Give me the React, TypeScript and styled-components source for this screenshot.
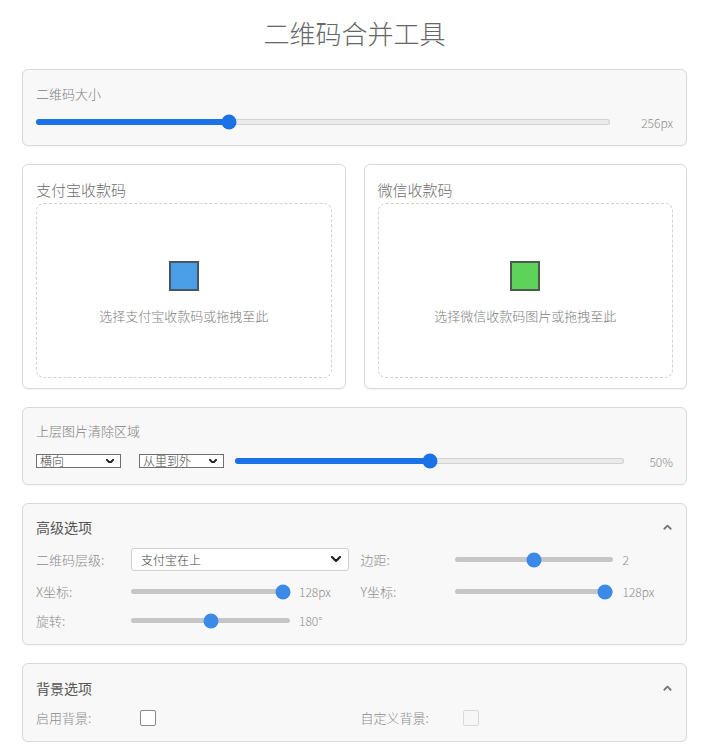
import React from 'react';
import styled, { createGlobalStyle } from 'styled-components';

const Global = createGlobalStyle`
  html, body { margin: 0; padding: 0; background: #fff; }
  body {
    font-family: "Noto Sans CJK SC", "Noto Sans", sans-serif;
    color: #666;
  }
`;

const Page = styled.div`
  width: 665px;
  margin-left: 22px;
  padding-top: 15px;
  display: flex;
  flex-direction: column;
  gap: 18px;
`;

const Title = styled.h1`
  margin: 0;
  font-size: 26px;
  line-height: 36px;
  font-weight: 300;
  color: #666;
  text-align: center;
`;

const Card = styled.section<{ $white?: boolean; $pad: string }>`
  box-sizing: border-box;
  background: ${p => (p.$white ? '#fff' : '#f8f8f8')};
  border: 1px solid #d9d9d9;
  border-radius: 6px;
  box-shadow: 0 1px 2px rgba(0, 0, 0, 0.04);
  padding: ${p => p.$pad};
  display: flex;
  flex-direction: column;
`;

const Label = styled.div<{ $mb: number }>`
  font-size: 13px;
  line-height: 18px;
  font-weight: 300;
  color: #808080;
  margin-bottom: ${p => p.$mb}px;
`;

const SliderRow = styled.div`
  display: flex;
  align-items: center;
  height: 18px;
`;

const Value = styled.span<{ $w?: number; $ml?: number }>`
  font-size: 12px;
  font-weight: 300;
  color: #8c8c8c;
  white-space: nowrap;
  ${p => (p.$w ? `width: ${p.$w}px; text-align: right;` : '')}
  margin-left: ${p => p.$ml ?? 13}px;
`;

const Track = styled.div<{ $tone: 'blue' | 'gray'; $w?: number }>`
  position: relative;
  ${p => (p.$w ? `width: ${p.$w}px; flex: none;` : 'flex: 1;')}
  height: ${p => (p.$tone === 'blue' ? 6 : 5)}px;
  border-radius: 4px;
  background: ${p => (p.$tone === 'blue' ? '#ebebeb' : '#c6c6c6')};
  box-shadow: ${p => (p.$tone === 'blue' ? 'inset 0 0 0 1px #d2d2d2' : 'none')};
`;

const Fill = styled.div`
  position: absolute;
  left: 0;
  top: 0;
  bottom: 0;
  border-radius: 4px;
  background: #1b72e6;
`;

const Thumb = styled.div<{ $tone: 'blue' | 'gray' }>`
  position: absolute;
  top: 50%;
  width: 15px;
  height: 15px;
  border-radius: 50%;
  background: ${p => (p.$tone === 'blue' ? '#1b72e6' : '#3b8ae8')};
  transform: translate(-50%, -50%);
`;

function Slider({ pct, tone, w }: { pct: number; tone: 'blue' | 'gray'; w?: number }) {
  const pos = `calc(7.5px + ${pct} * (100% - 15px))`;
  return (
    <Track $tone={tone} $w={w}>
      {tone === 'blue' && <Fill style={{ width: pos }} />}
      <Thumb $tone={tone} style={{ left: pos }} />
    </Track>
  );
}

const Pair = styled.div`
  display: grid;
  grid-template-columns: 1fr 1fr;
  gap: 18px;
`;

const UploadTitle = styled.div`
  font-size: 15px;
  line-height: 20px;
  font-weight: 300;
  color: #6e6e6e;
  margin-bottom: 3px;
`;

const DropZone = styled.div`
  box-sizing: border-box;
  height: 175px;
  border: 1px dashed #d2d2d2;
  border-radius: 8px;
  display: flex;
  flex-direction: column;
  align-items: center;
  justify-content: center;
  gap: 16px;
  padding-top: 4px;
`;

const Swatch = styled.div<{ $fill: string; $edge: string }>`
  box-sizing: border-box;
  width: 30px;
  height: 30px;
  background: ${p => p.$fill};
  border: 2px solid ${p => p.$edge};
`;

const DropText = styled.div`
  font-size: 13px;
  line-height: 18px;
  font-weight: 300;
  color: #808080;
`;

const MiniSelect = styled.div<{ $mr: number }>`
  box-sizing: border-box;
  width: 85px;
  height: 14px;
  border: 1px solid #707070;
  background: #fff;
  display: flex;
  align-items: center;
  justify-content: space-between;
  padding: 0 6px 0 3px;
  margin-right: ${p => p.$mr}px;
  font-size: 12px;
  line-height: 12px;
  font-weight: 300;
  color: #444;
  flex: none;
`;

const Header = styled.div<{ $mb: number }>`
  display: flex;
  align-items: center;
  justify-content: space-between;
  height: 18px;
  margin-bottom: ${p => p.$mb}px;
  font-size: 14px;
  color: #555;
`;

const Row = styled.div<{ $mt?: number; $h: number }>`
  display: grid;
  grid-template-columns: 1fr 1fr;
  column-gap: 12px;
  height: ${p => p.$h}px;
  margin-top: ${p => p.$mt ?? 0}px;
`;

const Field = styled.div`
  display: flex;
  align-items: center;
  min-width: 0;
`;

const FieldLabel = styled.span<{ $w: number }>`
  width: ${p => p.$w}px;
  flex: none;
  font-size: 13px;
  font-weight: 300;
  color: #8c8c8c;
  white-space: nowrap;
`;

const Select = styled.div`
  box-sizing: border-box;
  flex: 1;
  height: 23px;
  background: #fff;
  border: 1px solid #cfcfcf;
  border-radius: 3px;
  display: flex;
  align-items: center;
  justify-content: space-between;
  padding: 0 7px 0 9px;
  font-size: 12px;
  font-weight: 300;
  color: #444;
`;

const Check = styled.span<{ $disabled?: boolean }>`
  box-sizing: border-box;
  width: 16px;
  height: 16px;
  margin-left: 4px;
  border-radius: 2px;
  background: ${p => (p.$disabled ? '#f6f6f6' : '#fff')};
  border: 1px solid ${p => (p.$disabled ? '#d8d8d8' : '#8a8a8a')};
`;

const ChevronDown = ({ size = 9, stroke = 2.2 }: { size?: number; stroke?: number }) => (
  <svg width={size} height={size * 0.62} viewBox="0 0 10 6.2" fill="none">
    <polyline points="1,1 5,5 9,1" stroke="#222" strokeWidth={stroke} strokeLinecap="round" strokeLinejoin="round" />
  </svg>
);

const ChevronUp = () => (
  <svg width="9" height="6" viewBox="0 0 10 6.5" fill="none" style={{ marginRight: 1 }}>
    <polyline points="1.5,5.2 5,1.7 8.5,5.2" stroke="#777" strokeWidth="2" strokeLinecap="round" strokeLinejoin="round" />
  </svg>
);

export default function App() {
  return (
    <>
      <Global />
      <Page>
        <Title>二维码合并工具</Title>

        <Card $pad="15px 13px 14px">
          <Label $mb={10}>二维码大小</Label>
          <SliderRow>
            <Slider pct={0.332} tone="blue" />
            <Value $w={50}>256px</Value>
          </SliderRow>
        </Card>

        <Pair>
          <Card $white $pad="15px 13px 10px">
            <UploadTitle>支付宝收款码</UploadTitle>
            <DropZone>
              <Swatch $fill="#4b9fe6" $edge="#4a5563" />
              <DropText>选择支付宝收款码或拖拽至此</DropText>
            </DropZone>
          </Card>
          <Card $white $pad="15px 13px 10px">
            <UploadTitle>微信收款码</UploadTitle>
            <DropZone>
              <Swatch $fill="#5dd35a" $edge="#4b5a4b" />
              <DropText>选择微信收款码图片或拖拽至此</DropText>
            </DropZone>
          </Card>
        </Pair>

        <Card $pad="14px 13px 14px">
          <Label $mb={12}>上层图片清除区域</Label>
          <SliderRow>
            <MiniSelect $mr={18}>
              横向
              <ChevronDown size={8} stroke={2.4} />
            </MiniSelect>
            <MiniSelect $mr={11}>
              从里到外
              <ChevronDown size={8} stroke={2.4} />
            </MiniSelect>
            <Slider pct={0.5} tone="blue" />
            <Value $w={36}>50%</Value>
          </SliderRow>
        </Card>

        <Card $pad="14px 13px 12px">
          <Header $mb={12}>
            高级选项
            <ChevronUp />
          </Header>
          <Row $h={23}>
            <Field>
              <FieldLabel $w={95}>二维码层级:</FieldLabel>
              <Select>
                支付宝在上
                <ChevronDown size={10} stroke={2.2} />
              </Select>
            </Field>
            <Field>
              <FieldLabel $w={94}>边距:</FieldLabel>
              <Slider pct={0.5} tone="gray" w={158} />
              <Value $ml={10}>2</Value>
            </Field>
          </Row>
          <Row $h={23} $mt={9}>
            <Field>
              <FieldLabel $w={95}>X坐标:</FieldLabel>
              <Slider pct={1} tone="gray" w={159} />
              <Value $ml={9}>128px</Value>
            </Field>
            <Field>
              <FieldLabel $w={94}>Y坐标:</FieldLabel>
              <Slider pct={1} tone="gray" w={158} />
              <Value $ml={10}>128px</Value>
            </Field>
          </Row>
          <Row $h={23} $mt={6}>
            <Field>
              <FieldLabel $w={95}>旋转:</FieldLabel>
              <Slider pct={0.5} tone="gray" w={159} />
              <Value $ml={9}>180°</Value>
            </Field>
            <Field />
          </Row>
        </Card>

        <Card $pad="15px 13px 15px">
          <Header $mb={11}>
            背景选项
            <ChevronUp />
          </Header>
          <Row $h={18}>
            <Field>
              <FieldLabel $w={100}>启用背景:</FieldLabel>
              <Check />
            </Field>
            <Field>
              <FieldLabel $w={98}>自定义背景:</FieldLabel>
              <Check $disabled />
            </Field>
          </Row>
        </Card>
      </Page>
    </>
  );
}
